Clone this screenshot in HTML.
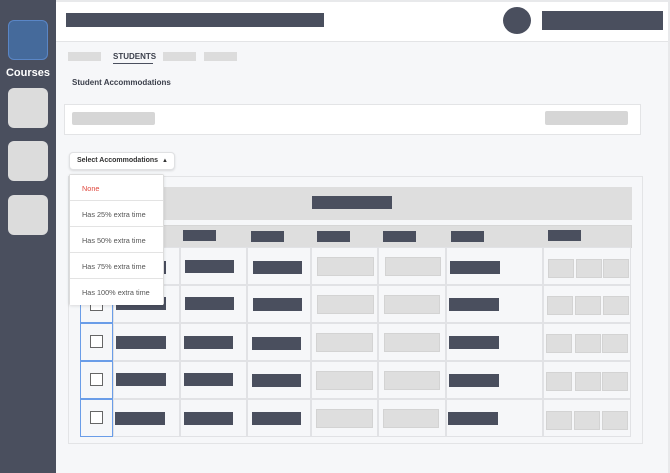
<!DOCTYPE html>
<html><head><meta charset="utf-8"><style>
*{margin:0;padding:0;box-sizing:border-box}
body{width:670px;height:473px;position:relative;overflow:hidden;background:#f6f7f9;font-family:"Liberation Sans",sans-serif}
div{position:absolute}
.d{background:#4a4f5e}
.l{background:#dedede;border:1px solid #d3d3d3}
.c{border:1px solid #e1e2e5;background:#f6f7f9}
.sq{left:8px;width:40px;height:40px;border-radius:6px;background:#dcdcdc}
.it{left:0;width:93px;height:26px;border-bottom:1px solid #e3e3e3;font-size:7.3px;color:#555;padding:9px 0 0 12px;background:#fff}
</style></head><body>
<div style="left:0;top:0;width:56px;height:473px;background:#4a4f5e"></div>
<div style="left:8px;top:20px;width:40px;height:40px;border-radius:6px;background:#456a9b;border:1px solid #5a86c6"></div>
<div style="left:0;top:67px;width:56px;text-align:center;color:#fff;font-weight:bold;font-size:11px">Courses</div>
<div class="sq" style="top:88px"></div>
<div class="sq" style="top:141px"></div>
<div class="sq" style="top:195px"></div>
<div style="left:56px;top:0;width:614px;height:2px;background:#e8e9eb"></div>
<div style="left:56px;top:2px;width:612px;height:40px;background:#fff;border-bottom:1px solid #e3e4e6"></div>
<div style="left:668px;top:0;width:2px;height:473px;background:#e8e9eb"></div>
<div class="d" style="left:66px;top:13px;width:258px;height:14px"></div>
<div class="d" style="left:503px;top:7px;width:28px;height:27px;border-radius:50%"></div>
<div class="d" style="left:542px;top:11px;width:121px;height:19px"></div>
<div style="left:68px;top:52px;width:33px;height:9px;background:#dcdcdc"></div>
<div style="left:113px;top:52px;font-size:8px;font-weight:bold;color:#3c404c">STUDENTS</div>
<div style="left:113px;top:63px;width:40px;height:1px;background:#4a4f5e"></div>
<div style="left:163px;top:52px;width:33px;height:9px;background:#dcdcdc"></div>
<div style="left:204px;top:52px;width:33px;height:9px;background:#dcdcdc"></div>
<div style="left:72px;top:78px;font-size:8px;font-weight:bold;color:#3c404c">Student Accommodations</div>
<div style="left:64px;top:104px;width:577px;height:31px;background:#fff;border:1px solid #e3e4e6"></div>
<div style="left:72px;top:112px;width:83px;height:13px;background:#d6d6d6;border-radius:2px"></div>
<div style="left:545px;top:111px;width:83px;height:14px;background:#d6d6d6;border-radius:2px"></div>
<div style="left:68px;top:176px;width:575px;height:268px;background:#f6f7f9;border:1px solid #e3e4e6"></div>
<div style="left:80px;top:187px;width:552px;height:33px;background:#dedede"></div>
<div class="d" style="left:312px;top:196px;width:80px;height:13px"></div>
<div style="left:80px;top:225px;width:552px;height:23px;background:#dedede;border:1px solid #d6d6d6"></div>
<div class="d" style="left:183px;top:230px;width:33px;height:11px"></div>
<div class="d" style="left:251px;top:231px;width:33px;height:11px"></div>
<div class="d" style="left:317px;top:231px;width:33px;height:11px"></div>
<div class="d" style="left:383px;top:231px;width:33px;height:11px"></div>
<div class="d" style="left:451px;top:231px;width:33px;height:11px"></div>
<div class="d" style="left:548px;top:230px;width:33px;height:11px"></div>

<div style="left:0;top:247px;width:670px;height:38px">
<div style="left:80px;top:0;width:33px;height:38px;border:1px solid #6a9de8"></div><div style="left:90px;top:13px;width:13px;height:13px;border:1.5px solid #666;background:#fff"></div>
<div class="c" style="left:113px;top:0;width:67px;height:38px"></div><div class="d" style="left:116px;top:14px;width:50px;height:13px"></div>
<div class="c" style="left:180px;top:0;width:67px;height:38px"></div><div class="d" style="left:185px;top:13px;width:49px;height:13px"></div>
<div class="c" style="left:247px;top:0;width:64px;height:38px"></div><div class="d" style="left:253px;top:14px;width:49px;height:13px"></div>
<div class="c" style="left:311px;top:0;width:67px;height:38px"></div><div class="l" style="left:317px;top:10px;width:57px;height:19px"></div>
<div class="c" style="left:378px;top:0;width:68px;height:38px"></div><div class="l" style="left:385px;top:10px;width:56px;height:19px"></div>
<div class="c" style="left:446px;top:0;width:97px;height:38px"></div><div class="d" style="left:450px;top:14px;width:50px;height:13px"></div>
<div class="c" style="left:543px;top:0;width:88px;height:38px"></div><div class="l" style="left:548px;top:12px;width:26px;height:19px"></div><div class="l" style="left:576px;top:12px;width:26px;height:19px"></div><div class="l" style="left:603px;top:12px;width:26px;height:19px"></div>
</div>
<div style="left:0;top:285px;width:670px;height:38px">
<div style="left:80px;top:0;width:33px;height:38px;border:1px solid #6a9de8"></div><div style="left:90px;top:13px;width:13px;height:13px;border:1.5px solid #666;background:#fff"></div>
<div class="c" style="left:113px;top:0;width:67px;height:38px"></div><div class="d" style="left:116px;top:12px;width:50px;height:13px"></div>
<div class="c" style="left:180px;top:0;width:67px;height:38px"></div><div class="d" style="left:185px;top:12px;width:49px;height:13px"></div>
<div class="c" style="left:247px;top:0;width:64px;height:38px"></div><div class="d" style="left:253px;top:13px;width:49px;height:13px"></div>
<div class="c" style="left:311px;top:0;width:67px;height:38px"></div><div class="l" style="left:317px;top:10px;width:57px;height:19px"></div>
<div class="c" style="left:378px;top:0;width:68px;height:38px"></div><div class="l" style="left:384px;top:10px;width:56px;height:19px"></div>
<div class="c" style="left:446px;top:0;width:97px;height:38px"></div><div class="d" style="left:449px;top:13px;width:50px;height:13px"></div>
<div class="c" style="left:543px;top:0;width:88px;height:38px"></div><div class="l" style="left:547px;top:11px;width:26px;height:19px"></div><div class="l" style="left:575px;top:11px;width:26px;height:19px"></div><div class="l" style="left:603px;top:11px;width:26px;height:19px"></div>
</div>
<div style="left:0;top:323px;width:670px;height:38px">
<div style="left:80px;top:0;width:33px;height:38px;border:1px solid #6a9de8"></div><div style="left:90px;top:12px;width:13px;height:13px;border:1.5px solid #666;background:#fff"></div>
<div class="c" style="left:113px;top:0;width:67px;height:38px"></div><div class="d" style="left:116px;top:13px;width:50px;height:13px"></div>
<div class="c" style="left:180px;top:0;width:67px;height:38px"></div><div class="d" style="left:184px;top:13px;width:49px;height:13px"></div>
<div class="c" style="left:247px;top:0;width:64px;height:38px"></div><div class="d" style="left:252px;top:14px;width:49px;height:13px"></div>
<div class="c" style="left:311px;top:0;width:67px;height:38px"></div><div class="l" style="left:316px;top:10px;width:57px;height:19px"></div>
<div class="c" style="left:378px;top:0;width:68px;height:38px"></div><div class="l" style="left:384px;top:10px;width:56px;height:19px"></div>
<div class="c" style="left:446px;top:0;width:97px;height:38px"></div><div class="d" style="left:449px;top:13px;width:50px;height:13px"></div>
<div class="c" style="left:543px;top:0;width:88px;height:38px"></div><div class="l" style="left:546px;top:11px;width:26px;height:19px"></div><div class="l" style="left:575px;top:11px;width:26px;height:19px"></div><div class="l" style="left:602px;top:11px;width:26px;height:19px"></div>
</div>
<div style="left:0;top:361px;width:670px;height:38px">
<div style="left:80px;top:0;width:33px;height:38px;border:1px solid #6a9de8"></div><div style="left:90px;top:12px;width:13px;height:13px;border:1.5px solid #666;background:#fff"></div>
<div class="c" style="left:113px;top:0;width:67px;height:38px"></div><div class="d" style="left:116px;top:12px;width:50px;height:13px"></div>
<div class="c" style="left:180px;top:0;width:67px;height:38px"></div><div class="d" style="left:184px;top:12px;width:49px;height:13px"></div>
<div class="c" style="left:247px;top:0;width:64px;height:38px"></div><div class="d" style="left:252px;top:13px;width:49px;height:13px"></div>
<div class="c" style="left:311px;top:0;width:67px;height:38px"></div><div class="l" style="left:316px;top:10px;width:57px;height:19px"></div>
<div class="c" style="left:378px;top:0;width:68px;height:38px"></div><div class="l" style="left:384px;top:10px;width:56px;height:19px"></div>
<div class="c" style="left:446px;top:0;width:97px;height:38px"></div><div class="d" style="left:449px;top:13px;width:50px;height:13px"></div>
<div class="c" style="left:543px;top:0;width:88px;height:38px"></div><div class="l" style="left:546px;top:11px;width:26px;height:19px"></div><div class="l" style="left:575px;top:11px;width:26px;height:19px"></div><div class="l" style="left:602px;top:11px;width:26px;height:19px"></div>
</div>
<div style="left:0;top:399px;width:670px;height:38px">
<div style="left:80px;top:0;width:33px;height:38px;border:1px solid #6a9de8"></div><div style="left:90px;top:12px;width:13px;height:13px;border:1.5px solid #666;background:#fff"></div>
<div class="c" style="left:113px;top:0;width:67px;height:38px"></div><div class="d" style="left:115px;top:13px;width:50px;height:13px"></div>
<div class="c" style="left:180px;top:0;width:67px;height:38px"></div><div class="d" style="left:184px;top:13px;width:49px;height:13px"></div>
<div class="c" style="left:247px;top:0;width:64px;height:38px"></div><div class="d" style="left:252px;top:13px;width:49px;height:13px"></div>
<div class="c" style="left:311px;top:0;width:67px;height:38px"></div><div class="l" style="left:316px;top:10px;width:57px;height:19px"></div>
<div class="c" style="left:378px;top:0;width:68px;height:38px"></div><div class="l" style="left:383px;top:10px;width:56px;height:19px"></div>
<div class="c" style="left:446px;top:0;width:97px;height:38px"></div><div class="d" style="left:448px;top:13px;width:50px;height:13px"></div>
<div class="c" style="left:543px;top:0;width:88px;height:38px"></div><div class="l" style="left:546px;top:12px;width:26px;height:19px"></div><div class="l" style="left:574px;top:12px;width:26px;height:19px"></div><div class="l" style="left:602px;top:12px;width:26px;height:19px"></div>
</div>

<div style="left:69px;top:152px;width:106px;height:18px;background:#fff;border:1px solid #e0e1e3;border-radius:4px;box-shadow:0 1px 2px rgba(0,0,0,.12);font-size:7px;font-weight:bold;color:#333;padding:4px 0 0 7px;white-space:nowrap">Select Accommodations &nbsp;<span style="font-size:6px">▲</span></div>
<div style="left:69px;top:174px;width:95px;height:131px;background:#fff;border:1px solid #dcdcdc;border-radius:2px;box-shadow:0 1px 3px rgba(0,0,0,.12)">
<div class="it" style="top:0;color:#e0483e">None</div>
<div class="it" style="top:26px">Has 25% extra time</div>
<div class="it" style="top:52px">Has 50% extra time</div>
<div class="it" style="top:78px">Has 75% extra time</div>
<div class="it" style="top:104px;border-bottom:none">Has 100% extra time</div>
</div>
</body></html>
